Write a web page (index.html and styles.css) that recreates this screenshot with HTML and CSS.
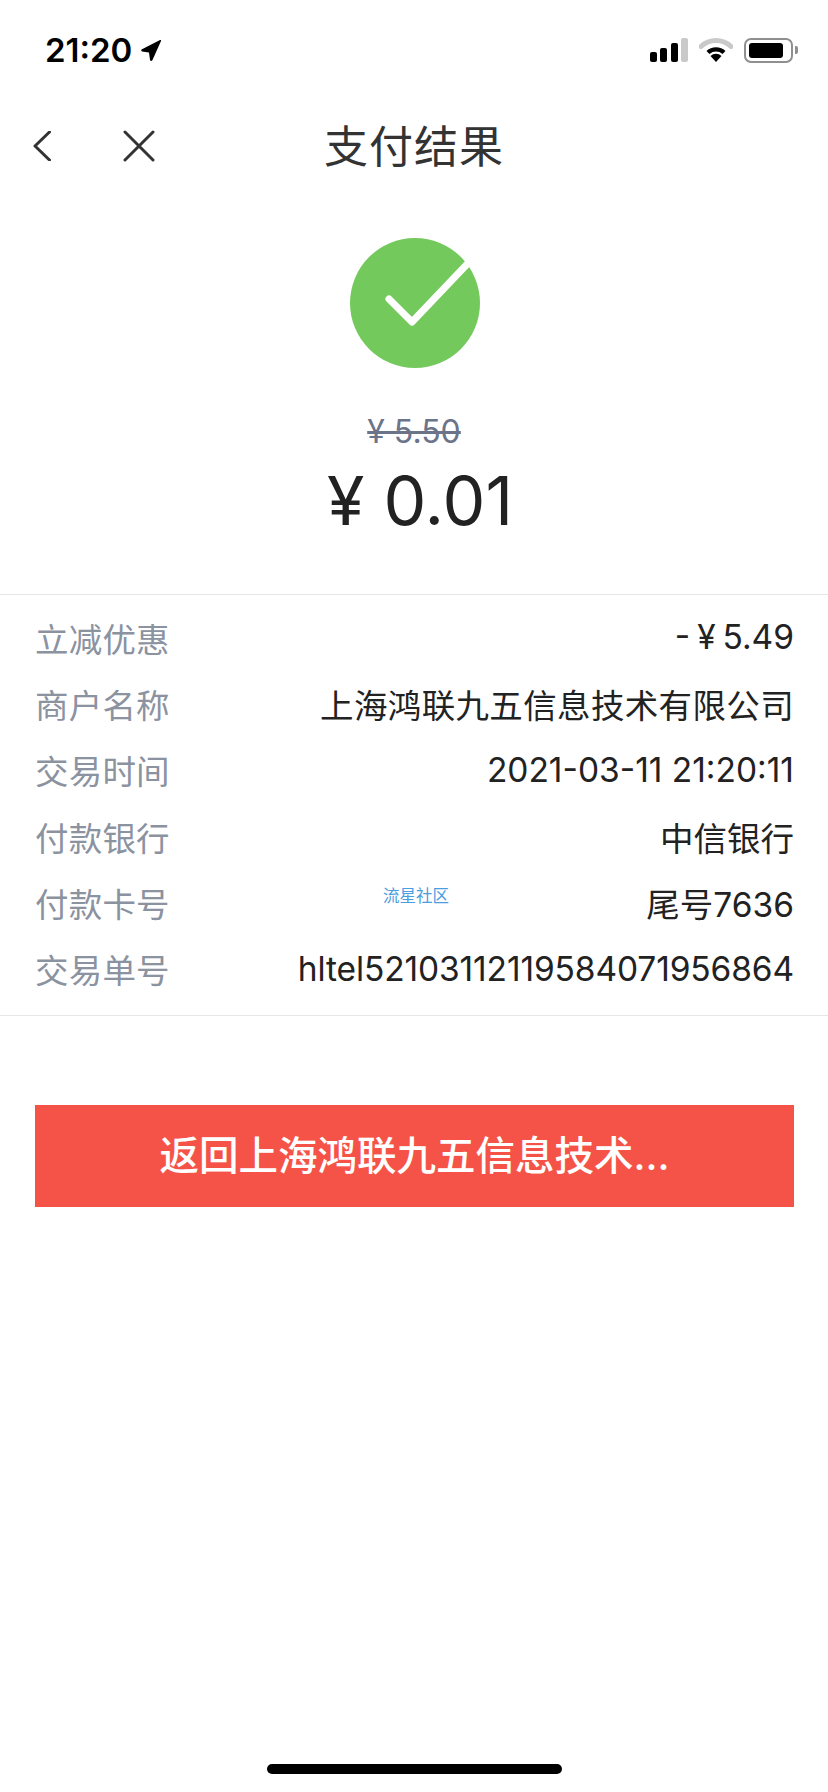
FILE: index.html
```html
<!DOCTYPE html>
<html lang="zh-CN">
<head>
    <meta charset="UTF-8">
    <meta name="viewport" content="width=device-width, initial-scale=1.0">
    <title>支付结果</title>
    <link rel="stylesheet" href="styles.css">
</head>
<body>
    <div class="page">
        <div class="status-bar">
            <div class="status-left">
                <span class="clock">21:20</span>
                <svg class="arrow" width="22" height="23" viewBox="0 0 22 23"><path d="M1.5 10.5 L20 1 Q21.5 .5 21 2 L12.5 21 Q11 23 10 21 L9 13.5 L2 12.5 Q.5 11.5 1.5 10.5 Z" fill="#000"/></svg>
            </div>
            <div class="status-right">
                <svg width="38" height="25" viewBox="0 0 38 25">
                    <rect x="0" y="14" width="7" height="10" rx="2" fill="#000"/>
                    <rect x="10" y="10" width="7" height="14" rx="2" fill="#000"/>
                    <rect x="21" y="5" width="7" height="19" rx="2" fill="#000"/>
                    <rect x="31" y="0" width="7" height="24" rx="2" fill="#c9c9c9"/>
                </svg>
                <svg width="34" height="26" viewBox="0 0 34 26">
                    <path d="M2 9.5 A22 22 0 0 1 32 9.5" fill="none" stroke="#c9c9c9" stroke-width="5" stroke-linecap="round"/>
                    <path d="M7.5 14 A14 14 0 0 1 26.5 14 L23.5 17 A10 10 0 0 0 10.5 17 Z" fill="#000"/>
                    <path d="M11.5 19 A8 8 0 0 1 22.5 19 L17 25 Z" fill="#000"/>
                </svg>
                <div class="battery">
                    <div class="battery-body"><div class="battery-level"></div></div>
                    <div class="battery-nub"></div>
                </div>
            </div>
        </div>

        <div class="nav">
            <div class="nav-icons">
                <svg width="18" height="30" viewBox="0 0 18 30"><path d="M16.5 1 L2 15 L16.5 29" fill="none" stroke="#333" stroke-width="3" stroke-linecap="round" stroke-linejoin="round"/></svg>
                <svg width="32" height="32" viewBox="0 0 32 32"><path d="M2 2 L30 30 M30 2 L2 30" fill="none" stroke="#333" stroke-width="3" stroke-linecap="round"/></svg>
            </div>
            <h1 class="nav-title">支付结果</h1>
        </div>

        <div class="summary">
            <svg class="ok-icon" width="130" height="130" viewBox="0 0 130 130">
                <circle cx="65" cy="65" r="65" fill="#74c95c"/>
                <path d="M39 61 L62 84 L122 21" fill="none" stroke="#fff" stroke-width="7" stroke-linecap="round" stroke-linejoin="round"/>
            </svg>
            <div class="old-price">¥ 5.50</div>
            <div class="price">¥ 0.01</div>
        </div>

        <div class="details">
            <div class="row"><span class="label">立减优惠</span><span class="value value-money">- ¥ 5.49</span></div>
            <div class="row"><span class="label">商户名称</span><span class="value value-name">上海鸿联九五信息技术有限公司</span></div>
            <div class="row"><span class="label">交易时间</span><span class="value">2021-03-11 21:20:11</span></div>
            <div class="row"><span class="label">付款银行</span><span class="value">中信银行</span></div>
            <div class="row"><span class="label">付款卡号</span><span class="value">尾号7636</span><span class="watermark">流星社区</span></div>
            <div class="row"><span class="label">交易单号</span><span class="value value-order">hltel52103112119584071956864</span></div>
        </div>

        <button class="back-btn" type="button">返回上海鸿联九五信息技术...</button>

        <div class="home-bar"></div>
    </div>
</body>
</html>
```

FILE: styles.css
```css
* {
    box-sizing: border-box;
}
body {
    margin: 0;
    background-color: #fff;
    font-family: Inter, "Noto Sans CJK SC", sans-serif;
    color: #222;
}
.page {
    height: 1792px;
    display: flex;
    flex-direction: column;
    position: relative;
}
.status-bar {
    height: 88px;
    padding: 37px 30px 0 45px;
    display: flex;
    justify-content: space-between;
    align-items: flex-start;
}
.status-left {
    display: flex;
    align-items: center;
    gap: 8px;
    height: 26px;
}
.clock {
    font-size: 33px;
    font-weight: 600;
    color: #000;
}
.status-right {
    display: flex;
    align-items: center;
    gap: 11px;
}
.battery {
    display: flex;
    align-items: center;
    gap: 2px;
}
.battery-body {
    width: 49px;
    height: 25px;
    padding: 3px;
    border: 2px solid #8f8f8f;
    border-radius: 7px;
}
.battery-level {
    width: 34px;
    height: 100%;
    background-color: #000;
    border-radius: 3px;
}
.battery-nub {
    width: 3px;
    height: 8px;
    background-color: #8f8f8f;
    border-radius: 0 2px 2px 0;
}
.nav {
    height: 116px;
    padding-bottom: 4px;
    position: relative;
    display: flex;
    align-items: center;
    justify-content: center;
}
.nav-icons {
    position: absolute;
    left: 33px;
    top: 42px;
    display: flex;
    align-items: center;
    gap: 72px;
}
.nav-title {
    margin: 0;
    font-size: 44px;
    font-weight: 400;
    color: #333;
    letter-spacing: 1px;
}
.summary {
    padding-top: 34px;
    display: flex;
    flex-direction: column;
    align-items: center;
}
.ok-icon {
    display: block;
    margin-left: 1px;
}
.old-price {
    margin-top: 46px;
    font-size: 32px;
    line-height: 36px;
    color: #6b7488;
    text-decoration: line-through;
}
.price {
    margin-top: 8px;
    margin-left: 12px;
    font-size: 68px;
    line-height: 84px;
    color: #222;
}
.details {
    margin-top: 52px;
    padding: 11px 34px 11px 35px;
    border-top: 1px solid #e6e6e6;
    border-bottom: 1px solid #e6e6e6;
}
.row {
    height: 66.3px;
    padding-bottom: 4px;
    display: flex;
    justify-content: space-between;
    align-items: center;
    font-size: 33.5px;
    position: relative;
}
.label {
    color: #8b92a0;
    letter-spacing: 0.2px;
}
.value {
    color: #222;
}
.value-money {
    word-spacing: -2.5px;
}
.value-name {
    letter-spacing: 0.35px;
}
.value-order {
    letter-spacing: -0.12px;
}
.watermark {
    position: absolute;
    left: 348px;
    top: 12px;
    font-size: 16.5px;
    color: #4a9de0;
}
.back-btn {
    margin: 89px 34px 0 35px;
    height: 102px;
    padding-bottom: 8px;
    border: none;
    background-color: #f65348;
    color: #fff;
    font-family: inherit;
    font-size: 39.5px;
    font-weight: 500;
}
.home-bar {
    position: absolute;
    left: 267px;
    top: 1764px;
    width: 295px;
    height: 10px;
    background-color: #000;
    border-radius: 5px;
}
```
